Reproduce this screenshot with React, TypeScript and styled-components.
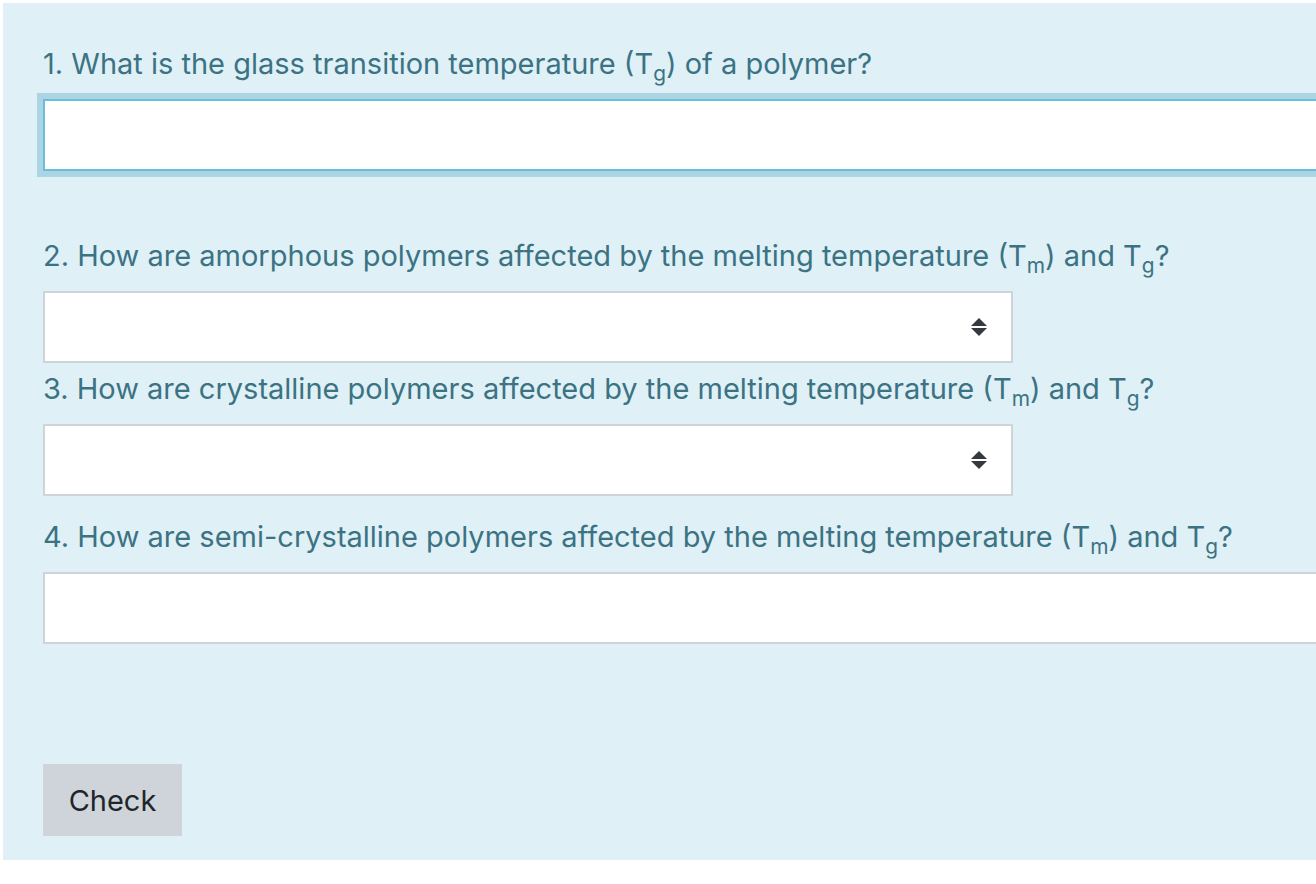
import React from "react";
import styled, { createGlobalStyle } from "styled-components";

const Global = createGlobalStyle`
  html, body { margin: 0; padding: 0; overflow: hidden; background: #ffffff; }
  body { font-family: Inter, "Noto Sans", sans-serif; }
`;

const Page = styled.div`
  padding: 3px 0 0 3px;
  width: 1500px;
`;

const Panel = styled.div`
  background: #dff0f7;
  padding: 38px 0 24px 40px;
  color: #3b7383;
  font-size: 29px;
  line-height: 45px;
`;

const Question = styled.div<{ $gap: number }>`
  margin-bottom: ${(p) => p.$gap}px;
`;

const Prompt = styled.div`
  margin: 0 0 13px 0;
  white-space: nowrap;
`;

const Sub = styled.sub`
  font-size: 72%;
  vertical-align: -0.32em;
  line-height: 0;
`;

const TextInput = styled.div<{ $focused?: boolean }>`
  box-sizing: border-box;
  width: 1400px;
  height: 72px;
  background: #ffffff;
  border: 2px solid ${(p) => (p.$focused ? "#6bbddf" : "#ced4da")};
  box-shadow: ${(p) => (p.$focused ? "0 0 0 6px #acd5e3" : "none")};
`;

const Select = styled.div`
  box-sizing: border-box;
  width: 970px;
  height: 72px;
  background: #ffffff;
  border: 2px solid #ced4da;
  display: flex;
  align-items: center;
  justify-content: flex-end;
  padding-right: 24px;
`;

const Arrows = styled.svg`
  width: 16px;
  height: 20px;
  display: block;
`;

const CheckButton = styled.button`
  box-sizing: border-box;
  width: 139px;
  height: 72px;
  background: #ced4da;
  border: none;
  border-radius: 0;
  color: #212529;
  font-family: Inter, "Noto Sans", sans-serif;
  font-size: 29px;
  padding: 0;
  display: block;
`;

const T = ({ s }: { s: string }) => (
  <>
    T<Sub>{s}</Sub>
  </>
);

const SelectArrows = () => (
  <Arrows viewBox="0 0 16 20">
    <path d="M8 1 L16 9 L0 9 Z" fill="#343a40" />
    <path d="M0 11 L16 11 L8 19 Z" fill="#343a40" />
  </Arrows>
);

export default function App() {
  return (
    <>
      <Global />
      <Page>
        <Panel>
          <Question $gap={62}>
            <Prompt>
              1. What is the glass transition temperature (<T s="g" />) of a polymer?
            </Prompt>
            <TextInput $focused />
          </Question>
          <Question $gap={3}>
            <Prompt>
              2. How are amorphous polymers affected by the melting temperature (<T s="m" />) and <T s="g" />?
            </Prompt>
            <Select>
              <SelectArrows />
            </Select>
          </Question>
          <Question $gap={18}>
            <Prompt>
              3. How are crystalline polymers affected by the melting temperature (<T s="m" />) and <T s="g" />?
            </Prompt>
            <Select>
              <SelectArrows />
            </Select>
          </Question>
          <Question $gap={120}>
            <Prompt>
              4. How are semi-crystalline polymers affected by the melting temperature (<T s="m" />) and <T s="g" />?
            </Prompt>
            <TextInput />
          </Question>
          <CheckButton>Check</CheckButton>
        </Panel>
      </Page>
    </>
  );
}
